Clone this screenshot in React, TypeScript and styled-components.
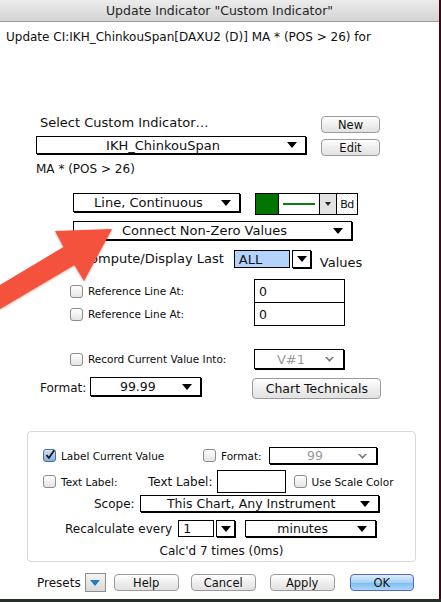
import React from "react"
import styled, { createGlobalStyle, css } from "styled-components"

const GlobalStyle = createGlobalStyle`
  html, body {
    margin: 0;
    padding: 0;
    background: #26302a;
  }
  body {
    font-family: "DejaVu Sans", "Liberation Sans", sans-serif;
    font-size: 12px;
    color: #111;
  }
`

const Frame = styled.div`
  position: relative;
  width: 441px;
  height: 602px;
  overflow: hidden;
  background: #26302a;
`

const Window = styled.div`
  width: 439px;
  height: 599px;
  background: #fff;
  border-right: 2px solid #3a0714;
  display: flex;
  flex-direction: column;
`

const TitleBar = styled.div`
  height: 21px;
  line-height: 21px;
  text-align: center;
  font-size: 12.5px;
  color: #262626;
  background: linear-gradient(#ececec, #d3d3d3);
  border-bottom: 1px solid #9d9d9d;
`

const Body = styled.div`
  display: flex;
  flex-direction: column;
`

const Heading = styled.div`
  margin-top: 7px;
  padding-left: 6px;
  height: 16px;
  line-height: 16px;
  font-size: 12px;
  white-space: nowrap;
`

const Picker = styled.div`
  margin-top: 71px;
  padding-left: 36px;
  display: flex;
  height: 60px;
`

const PickerMain = styled.div`
  width: 270px;
  display: flex;
  flex-direction: column;
`

const PickerButtons = styled.div`
  margin-left: 15px;
  display: flex;
  flex-direction: column;
  gap: 6px;
`

const Label = styled.div<{ $pad?: number; $h?: number; $size?: number }>`
  padding-left: ${p => p.$pad ?? 0}px;
  height: ${p => p.$h ?? 14}px;
  line-height: ${p => p.$h ?? 14}px;
  font-size: ${p => p.$size ?? 12}px;
  white-space: nowrap;
`

const Row = styled.div<{ $top: number; $left: number; $h: number }>`
  margin-top: ${p => p.$top}px;
  padding-left: ${p => p.$left}px;
  height: ${p => p.$h}px;
  display: flex;
  align-items: center;
`

const FieldGrid = styled.div<{ $top: number; $h: number }>`
  margin-top: ${p => p.$top}px;
  padding-left: 70px;
  height: ${p => p.$h}px;
  display: grid;
  grid-template-columns: 184px 91px;
  align-items: center;
`

const CheckLabel = styled.label<{ $w?: number }>`
  display: flex;
  align-items: center;
  gap: 5px;
  font-size: 10.5px;
  color: #0c0c0c;
  white-space: nowrap;
  ${p => p.$w && css`width: ${p.$w}px;`}
`

const Box = styled.span<{ $checked?: boolean }>`
  width: 13px;
  height: 13px;
  box-sizing: border-box;
  flex: none;
  border-radius: 3px;
  border: 1px solid #8c8c8c;
  background: linear-gradient(#ffffff, #e4e4e4);
  display: flex;
  align-items: center;
  justify-content: center;
  ${p =>
    p.$checked &&
    css`
      border-color: #4d6d9a;
      background: linear-gradient(#cfe3f7, #7fb0e0);
    `}
`

const Select = styled.div<{ $w: number; $h: number; $disabled?: boolean; $size?: number }>`
  position: relative;
  box-sizing: border-box;
  width: ${p => p.$w}px;
  height: ${p => p.$h}px;
  border: 1px solid #000;
  box-shadow: 1px 1px 0 #000;
  background: #fff;
  display: flex;
  align-items: center;
  justify-content: center;
  padding-right: 16px;
  font-size: ${p => p.$size ?? 12.5}px;
  white-space: nowrap;
  color: ${p => (p.$disabled ? "#9a9a9a" : "#111")};
`

const Caret = styled.span`
  position: absolute;
  right: 8px;
  top: 50%;
  margin-top: -3px;
  width: 0;
  height: 0;
  border-left: 5px solid transparent;
  border-right: 5px solid transparent;
  border-top: 6px solid #000;
`

const SmallCaret = styled.svg`
  position: absolute;
  right: 9px;
  top: 50%;
  margin-top: -2px;
`

const Input = styled.div<{ $w: number; $h: number; $fill?: string }>`
  box-sizing: border-box;
  width: ${p => p.$w}px;
  height: ${p => p.$h}px;
  border: 1px solid #000;
  background: ${p => p.$fill ?? "#fff"};
  padding-left: 4px;
  display: flex;
  align-items: center;
  font-size: 12.5px;
`

const StepButton = styled.div<{ $h?: number }>`
  position: relative;
  box-sizing: border-box;
  width: 19px;
  height: ${p => p.$h ?? 18}px;
  margin-left: 2px;
  border: 1px solid #000;
  box-shadow: 1px 1px 0 #000;
  background: #fff;
`

const StepCaret = styled(Caret)`
  right: 3px;
`

const Button = styled.div<{ $w: number; $h?: number; $primary?: boolean }>`
  box-sizing: border-box;
  width: ${p => p.$w}px;
  height: ${p => p.$h ?? 17}px;
  border: 1px solid #9b9b9b;
  border-radius: 4px;
  background: linear-gradient(#ffffff, #ededed 55%, #e2e2e2);
  display: flex;
  align-items: center;
  justify-content: center;
  font-size: 11.5px;
  color: #111;
  ${p =>
    p.$primary &&
    css`
      border-color: #5a62c2;
      background: linear-gradient(#dbeefd, #a7d2f6 50%, #7dbcf0 51%, #a9d8fb);
    `}
`

const ColorWell = styled.div`
  margin-left: 15px;
  height: 22px;
  box-sizing: border-box;
  border: 1px solid #000;
  display: flex;
  align-self: flex-start;
`

const Swatch = styled.div`
  width: 22px;
  background: #007400;
`

const LineCell = styled.div`
  width: 40px;
  border-left: 1px solid #000;
  display: flex;
  align-items: center;
  justify-content: center;
  &::after {
    content: "";
    width: 32px;
    height: 2px;
    background: #0f7d0f;
  }
`

const WellArrow = styled.div`
  width: 16px;
  border-left: 1px solid #000;
  background: #e2e2e2;
  display: flex;
  align-items: center;
  justify-content: center;
  &::after {
    content: "";
    border-left: 3px solid transparent;
    border-right: 3px solid transparent;
    border-top: 4px solid #222;
  }
`

const BoldCell = styled.div`
  width: 20px;
  border-left: 1px solid #000;
  background: repeating-linear-gradient(45deg, #fff 0 2px, #ececec 2px 3px);
  display: flex;
  align-items: center;
  justify-content: center;
  font-size: 11px;
  letter-spacing: -0.5px;
`

const Group = styled.div`
  margin: 32px 0 0 27px;
  width: 389px;
  height: 131px;
  box-sizing: border-box;
  border: 1px solid #d9d9d9;
  border-radius: 4px;
  display: flex;
  flex-direction: column;
`

const GroupRow = styled.div<{ $top: number; $left: number; $h: number }>`
  margin-top: ${p => p.$top}px;
  padding-left: ${p => p.$left}px;
  height: ${p => p.$h}px;
  display: flex;
  align-items: center;
  white-space: nowrap;
`

const Status = styled.div`
  margin-top: 6px;
  height: 16px;
  line-height: 16px;
  text-align: center;
`

const Footer = styled.div`
  margin-top: 11px;
  padding-left: 37px;
  height: 19px;
  display: flex;
  align-items: center;
`

const PresetButton = styled.div`
  margin-left: 4px;
  width: 21px;
  height: 19px;
  box-sizing: border-box;
  border: 1px solid #8e8e8e;
  background: linear-gradient(#f4f4f4, #d9d9d9);
  display: flex;
  align-items: center;
  justify-content: center;
  &::after {
    content: "";
    border-left: 5px solid transparent;
    border-right: 5px solid transparent;
    border-top: 6px solid #1a7fc0;
  }
`

const Overlay = styled.svg`
  position: absolute;
  left: 0;
  top: 0;
  pointer-events: none;
  filter: drop-shadow(0 1px 1px rgba(120, 20, 0, 0.35));
`

function Check() {
  return (
    <svg width="13" height="13" viewBox="0 0 13 13" style={{ marginTop: -3, marginLeft: 1 }}>
      <path d="M2 7 L5 11 L12 1" fill="none" stroke="#111" strokeWidth="2.2" strokeLinejoin="round" />
    </svg>
  )
}

function Checkbox({ checked, label, w }: { checked?: boolean; label: string; w?: number }) {
  return (
    <CheckLabel $w={w}>
      <Box $checked={checked}>{checked && <Check />}</Box>
      {label}
    </CheckLabel>
  )
}

function PopUp({
  w,
  h,
  value,
  disabled,
  size
}: {
  w: number
  h: number
  value: string
  disabled?: boolean
  size?: number
}) {
  return (
    <Select $w={w} $h={h} $disabled={disabled} $size={size}>
      {value}
      {disabled ? (
        <SmallCaret width="9" height="5" viewBox="0 0 9 5">
          <path d="M0 0 L4.5 5 L9 0 Z" fill="#777" />
          <path d="M2 0 L4.5 2.6 L7 0 Z" fill="#fff" />
        </SmallCaret>
      ) : (
        <Caret />
      )}
    </Select>
  )
}

export default function App() {
  return (
    <Frame>
      <GlobalStyle />
      <Window>
        <TitleBar>Update Indicator "Custom Indicator"</TitleBar>
        <Body>
          <Heading>Update CI:IKH_ChinkouSpan[DAXU2 (D)] MA * (POS &gt; 26) for</Heading>

          <Picker>
            <PickerMain>
              <Label $pad={4} $size={13}>Select Custom Indicator…</Label>
              <div style={{ marginTop: 6 }}>
                <PopUp w={270} h={18} value="IKH_ChinkouSpan" size={13} />
              </div>
              <Label style={{ marginTop: 8 }}>MA * (POS &gt; 26)</Label>
            </PickerMain>
            <PickerButtons>
              <Button $w={59}>New</Button>
              <Button $w={59}>Edit</Button>
            </PickerButtons>
          </Picker>

          <Row $top={17} $left={73} $h={22}>
            <div style={{ alignSelf: "flex-start" }}>
              <PopUp w={167} h={19} value="Line, Continuous" size={13} />
            </div>
            <ColorWell>
              <Swatch />
              <LineCell />
              <WellArrow />
              <BoldCell>Bd</BoldCell>
            </ColorWell>
          </Row>

          <Row $top={6} $left={73} $h={19}>
            <PopUp w={279} h={19} value="Connect Non-Zero Values" size={13} />
          </Row>

          <Row $top={10} $left={81} $h={18}>
            <Label $size={13}>Compute/Display Last</Label>
            <Input $w={56} $h={18} $fill="#b3d3fb" style={{ marginLeft: 10, fontSize: 13 }}>
              ALL
            </Input>
            <StepButton>
              <StepCaret />
            </StepButton>
            <Label $size={13} style={{ marginLeft: 9, marginTop: 8 }}>Values</Label>
          </Row>

          <FieldGrid $top={11} $h={24}>
            <Checkbox label="Reference Line At:" />
            <Input $w={91} $h={24}>0</Input>
          </FieldGrid>
          <FieldGrid $top={-1} $h={24}>
            <Checkbox label="Reference Line At:" />
            <Input $w={91} $h={24}>0</Input>
          </FieldGrid>

          <FieldGrid $top={23} $h={20}>
            <Checkbox label="Record Current Value Into:" />
            <PopUp w={90} h={20} value="V#1" disabled size={13} />
          </FieldGrid>

          <Row $top={8} $left={40} $h={22}>
            <Label>Format:</Label>
            <div style={{ marginLeft: 4, alignSelf: "flex-start" }}>
              <PopUp w={111} h={19} value="99.99" />
            </div>
            <Button $w={129} $h={21} style={{ marginLeft: 51, fontSize: 12.5 }}>
              Chart Technicals
            </Button>
          </Row>

          <Group>
            <GroupRow $top={15} $left={15} $h={17}>
              <Checkbox checked label="Label Current Value" w={160} />
              <Checkbox label="Format:" w={66} />
              <PopUp w={108} h={17} value="99" disabled />
            </GroupRow>
            <GroupRow $top={6} $left={15} $h={23}>
              <Checkbox label="Text Label:" w={105} />
              <Label>Text Label:</Label>
              <Input $w={69} $h={23} style={{ marginLeft: 4 }} />
              <div style={{ marginLeft: 8 }}>
                <Checkbox label="Use Scale Color" />
              </div>
            </GroupRow>
            <GroupRow $top={2} $left={66} $h={17}>
              <Label>Scope:</Label>
              <div style={{ marginLeft: 5 }}>
                <PopUp w={239} h={17} value="This Chart, Any Instrument" />
              </div>
            </GroupRow>
            <GroupRow $top={8} $left={37} $h={17}>
              <Label>Recalculate every</Label>
              <Input $w={36} $h={17} style={{ marginLeft: 6 }}>1</Input>
              <StepButton $h={17}>
                <StepCaret />
              </StepButton>
              <div style={{ marginLeft: 10 }}>
                <PopUp w={131} h={17} value="minutes" />
              </div>
            </GroupRow>
            <Status>Calc'd 7 times (0ms)</Status>
          </Group>

          <Footer>
            <Label>Presets</Label>
            <PresetButton />
            <Button $w={65} style={{ marginLeft: 8 }}>Help</Button>
            <Button $w={65} style={{ marginLeft: 12 }}>Cancel</Button>
            <Button $w={65} style={{ marginLeft: 14 }}>Apply</Button>
            <Button $w={64} $primary style={{ marginLeft: 15 }}>OK</Button>
          </Footer>
        </Body>
      </Window>

      {/* callout arrow pointing at the connect pop-up */}
      <Overlay width="441" height="602" viewBox="0 0 441 602">
        <polygon
          points="112,229 84,281 74.5,265 -12,316 -22,298 63.5,247 55,231"
          fill="#f4523c"
        />
      </Overlay>
    </Frame>
  )
}
